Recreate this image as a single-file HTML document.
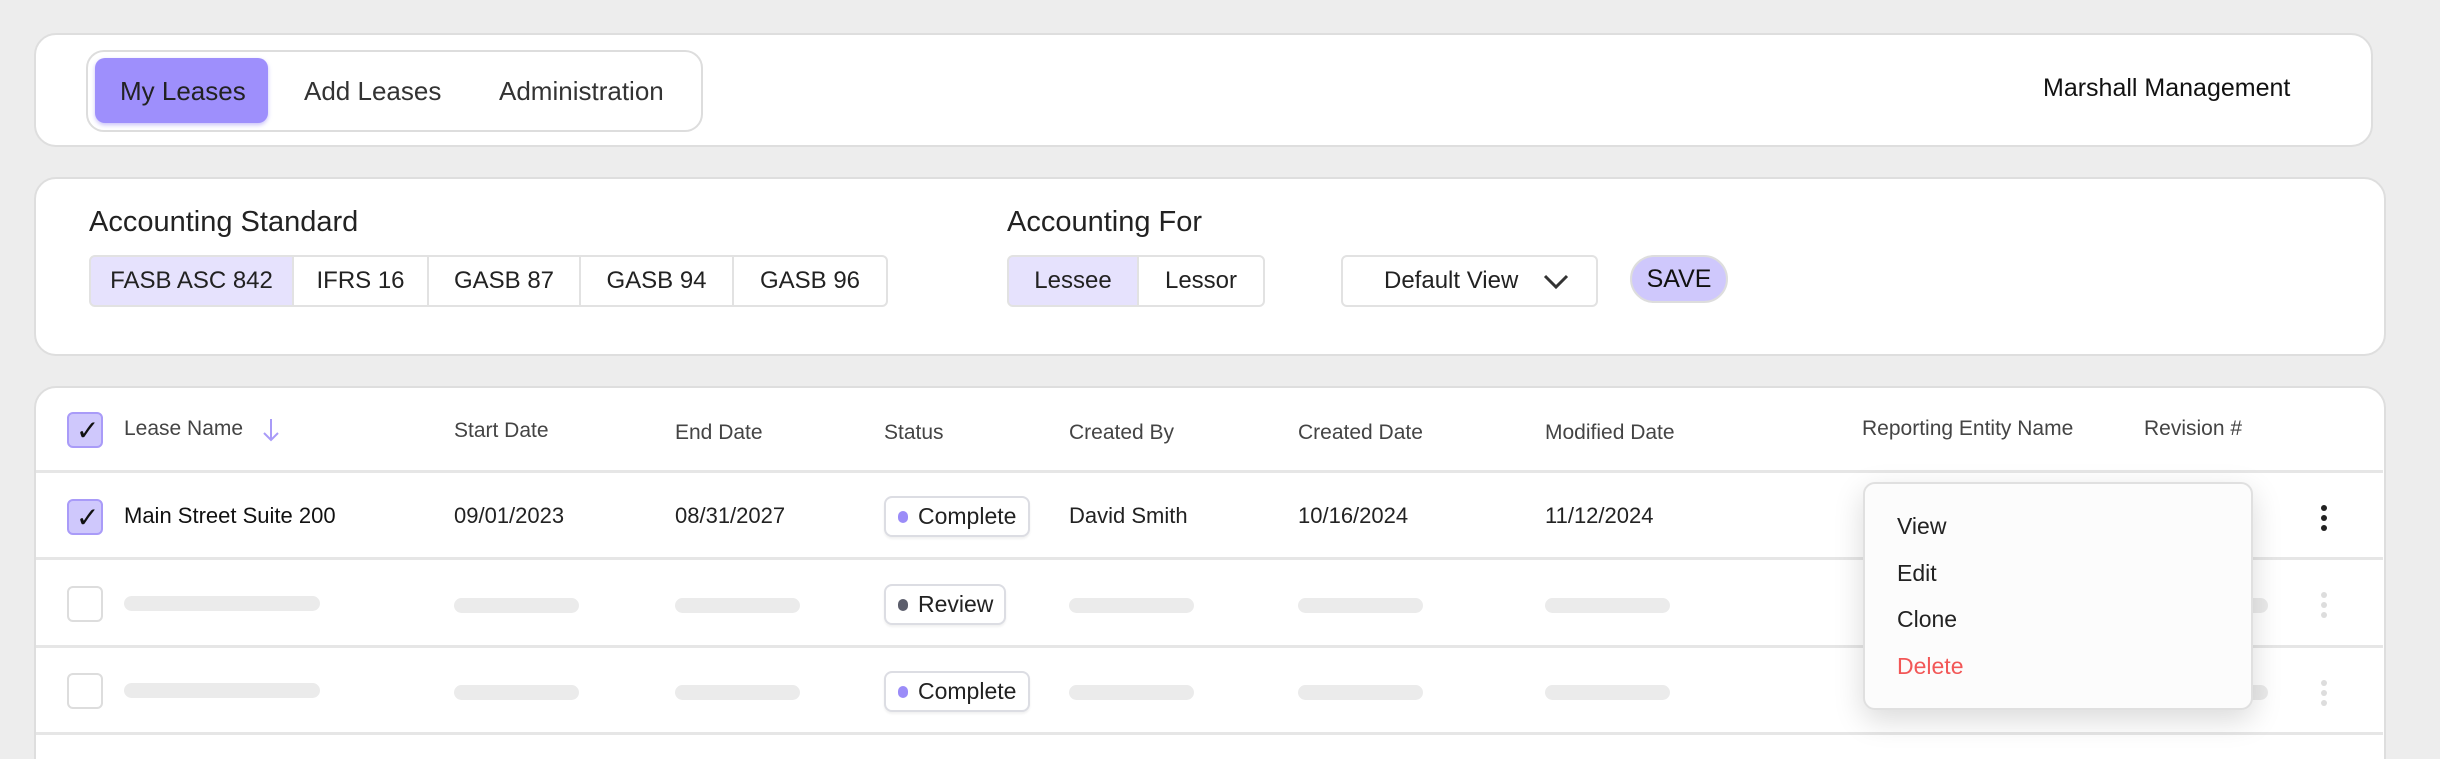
<!DOCTYPE html>
<html style="width:2440px;height:759px;overflow:hidden"><head><meta charset="utf-8"><style>
*{box-sizing:border-box;margin:0;padding:0}
body{width:2440px;height:759px;background:#ededed;font-family:"Liberation Sans",sans-serif;color:#222;position:relative;overflow:hidden}
.a{position:absolute}
.card{position:absolute;background:#fff;border:2px solid #dedede;border-radius:22px}
.t{position:absolute;white-space:nowrap;line-height:1}
.seg{position:absolute;top:255px;height:52px;border:2px solid #e2e2e2;background:#fff;font-size:24px;display:flex;align-items:center;justify-content:center;color:#222}
.seg.on{background:#e6e2fd}
.hd{font-size:21px;color:#444;top:420px}
.cb{position:absolute;left:67px;width:36px;height:36px;border-radius:6px;border:2px solid #ddd;background:#fff}
.cb.on{background:#cfc8fc;border-color:#a99bf8}
.cb.on::after{content:"✓";position:absolute;left:7px;top:0px;font-size:28px;color:#111}
.line{position:absolute;left:36px;width:2347px;height:3px;background:#e6e6e6}
.sk{position:absolute;height:15px;border-radius:8px;background:#ebebeb}
.badge{position:absolute;left:884px;height:41px;border:2px solid #dcdde3;border-radius:8px;background:#fff;font-size:23px;display:flex;align-items:center;padding-left:12px;box-shadow:0 2px 2px rgba(0,0,0,.06)}
.dot{width:10px;height:12px;border-radius:5px;background:#9b8cf8;margin-right:10px}
.kb{position:absolute;left:2321px;width:6px}
.kb i{display:block;width:6px;height:6px;border-radius:3px;background:#222;margin-bottom:4px}
.kb.l i{background:#ddd}
</style></head><body>
<div class="card" style="left:34px;top:33px;width:2339px;height:114px"></div>
<div class="a" style="left:86px;top:50px;width:617px;height:82px;border:2px solid #ddd;border-radius:18px;background:#fff"></div>
<div class="a" style="left:95px;top:58px;width:173px;height:65px;border-radius:10px;background:#9e8ffc;box-shadow:0 2px 4px rgba(120,100,240,.4)"></div>
<div class="t" style="left:120px;top:78px;font-size:26px;color:#222">My Leases</div>
<div class="t" style="left:304px;top:78px;font-size:26px;color:#333">Add Leases</div>
<div class="t" style="left:499px;top:78px;font-size:26px;color:#333">Administration</div>
<div class="t" style="left:2043px;top:76px;font-size:25px;color:#111;font-weight:500">Marshall Management</div>

<div class="card" style="left:34px;top:177px;width:2352px;height:179px"></div>
<div class="t" style="left:89px;top:208px;font-size:29px;color:#222">Accounting Standard</div>
<div class="seg on" style="left:89px;width:205px;border-radius:6px 0 0 6px">FASB ASC 842</div>
<div class="seg" style="left:292px;width:137px">IFRS 16</div>
<div class="seg" style="left:427px;width:154px">GASB 87</div>
<div class="seg" style="left:579px;width:155px">GASB 94</div>
<div class="seg" style="left:732px;width:156px;border-radius:0 6px 6px 0">GASB 96</div>
<div class="t" style="left:1007px;top:208px;font-size:29px;color:#222">Accounting For</div>
<div class="seg on" style="left:1007px;width:132px;border-radius:6px 0 0 6px">Lessee</div>
<div class="seg" style="left:1137px;width:128px;border-radius:0 6px 6px 0">Lessor</div>
<div class="seg" style="left:1341px;width:257px;border-radius:6px;justify-content:flex-start;padding-left:41px">Default View</div>
<svg class="a" style="left:1543px;top:274px" width="26" height="16" viewBox="0 0 26 16"><path d="M2 2 L13 13 L24 2" fill="none" stroke="#333" stroke-width="3"/></svg>
<div class="a" style="left:1630px;top:255px;width:98px;height:48px;border-radius:24px;background:#cfc8fc;border:2px solid #ddd;font-size:25px;display:flex;align-items:center;justify-content:center;color:#111">SAVE</div>

<div class="card" style="left:34px;top:386px;width:2352px;height:400px"></div>
<div class="cb on" style="top:412px"></div>
<div class="t hd" style="left:124px;top:418px">Lease Name</div>
<svg class="a" style="left:262px;top:418px" width="18" height="24" viewBox="0 0 18 24"><path d="M9 1 V22 M2 15 L9 22 L16 15" fill="none" stroke="#a99bf8" stroke-width="2"/></svg>
<div class="t hd" style="left:454px;top:420px">Start Date</div>
<div class="t hd" style="left:675px;top:422px">End Date</div>
<div class="t hd" style="left:884px;top:422px">Status</div>
<div class="t hd" style="left:1069px;top:422px">Created By</div>
<div class="t hd" style="left:1298px;top:422px">Created Date</div>
<div class="t hd" style="left:1545px;top:422px">Modified Date</div>
<div class="t hd" style="left:1862px;top:418px">Reporting Entity Name</div>
<div class="t hd" style="left:2144px;top:418px">Revision #</div>
<div class="line" style="top:470px"></div>
<div class="line" style="top:557px"></div>
<div class="line" style="top:645px"></div>
<div class="line" style="top:732px"></div>

<div class="cb on" style="top:499px"></div>
<div class="t" style="left:124px;top:505px;font-size:22px;font-weight:500;color:#111">Main Street Suite 200</div>
<div class="t" style="left:454px;top:505px;font-size:22px">09/01/2023</div>
<div class="t" style="left:675px;top:505px;font-size:22px">08/31/2027</div>
<div class="badge" style="top:496px;width:146px"><span class="dot"></span>Complete</div>
<div class="t" style="left:1069px;top:505px;font-size:22px">David Smith</div>
<div class="t" style="left:1298px;top:505px;font-size:22px">10/16/2024</div>
<div class="t" style="left:1545px;top:505px;font-size:22px">11/12/2024</div>
<div class="kb" style="top:505px"><i></i><i></i><i></i></div>

<div class="cb" style="top:586px"></div>
<div class="sk" style="left:124px;top:596px;width:196px"></div>
<div class="sk" style="left:454px;top:598px;width:125px"></div>
<div class="sk" style="left:675px;top:598px;width:125px"></div>
<div class="badge" style="top:584px;width:122px"><span class="dot" style="background:#5b5d6b"></span>Review</div>
<div class="sk" style="left:1069px;top:598px;width:125px"></div>
<div class="sk" style="left:1298px;top:598px;width:125px"></div>
<div class="sk" style="left:1545px;top:598px;width:125px"></div>
<div class="sk" style="left:2200px;top:598px;width:68px"></div>
<div class="kb l" style="top:592px"><i></i><i></i><i></i></div>

<div class="cb" style="top:673px"></div>
<div class="sk" style="left:124px;top:683px;width:196px"></div>
<div class="sk" style="left:454px;top:685px;width:125px"></div>
<div class="sk" style="left:675px;top:685px;width:125px"></div>
<div class="badge" style="top:671px;width:146px"><span class="dot"></span>Complete</div>
<div class="sk" style="left:1069px;top:685px;width:125px"></div>
<div class="sk" style="left:1298px;top:685px;width:125px"></div>
<div class="sk" style="left:1545px;top:685px;width:125px"></div>
<div class="sk" style="left:2200px;top:685px;width:68px"></div>
<div class="kb l" style="top:680px"><i></i><i></i><i></i></div>

<div class="a" style="left:1863px;top:482px;width:390px;height:228px;background:#fcfcfc;border:2px solid #e0e0e0;border-radius:12px;box-shadow:0 10px 30px rgba(0,0,0,.15)"></div>
<div class="t" style="left:1897px;top:515px;font-size:23px;color:#222">View</div>
<div class="t" style="left:1897px;top:562px;font-size:23px;color:#222">Edit</div>
<div class="t" style="left:1897px;top:608px;font-size:23px;color:#222">Clone</div>
<div class="t" style="left:1897px;top:655px;font-size:23px;color:#f25757">Delete</div>
</body></html>
